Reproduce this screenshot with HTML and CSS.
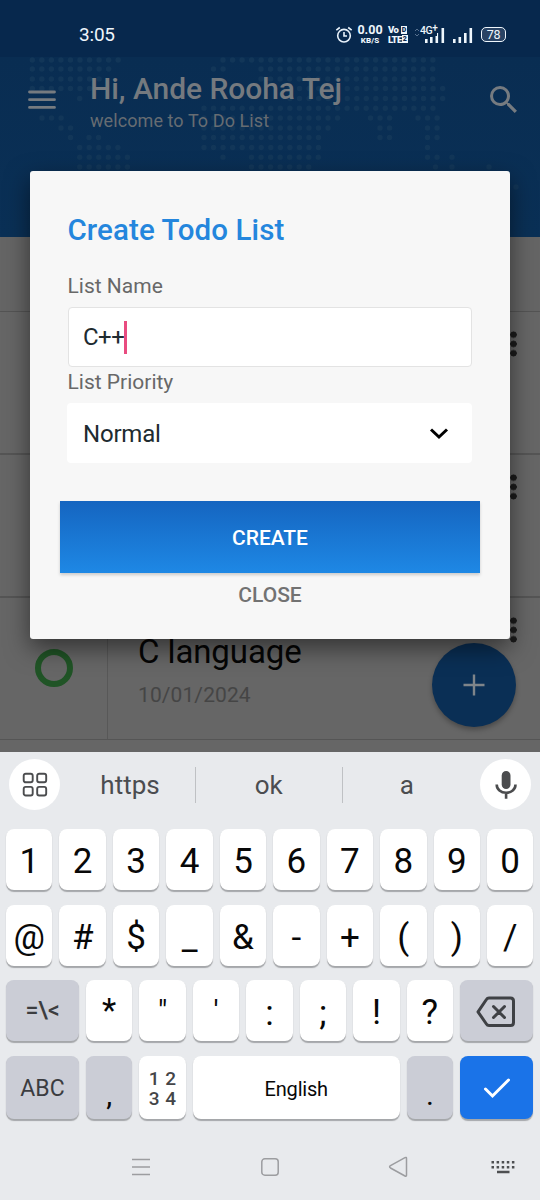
FILE: index.html
```
<!DOCTYPE html>
<html lang="en">
<head>
<meta charset="utf-8">
<title>To Do List</title>
<link rel="stylesheet" href="styles.css">
</head>
<body>
<div class="phone">
  <main class="app">
    <div class="status">
      <span class="clock">3:05</span>
      <svg class="alarm" width="18" height="18" viewBox="0 0 18 18" fill="none" stroke="#e8f2fb" stroke-width="1.6"><circle cx="9" cy="9.7" r="6.3"/><path d="M9 6v4h3M1.3 4.2 4.8 1.5M16.7 4.2 13.2 1.5"/></svg>
      <div class="speed"><b>0.00</b><span>KB/S</span></div>
      <div class="volte"><span>Vo<i>D</i></span><span>LTE<i>2</i></span></div>
      <div class="net"><span>4G<sup>+</sup></span>
        <svg width="31" height="18" viewBox="0 0 31 18" fill="#eef6fc"><path d="M11 13h2.6v4H11zM16 11h2.6v6H16zM21.500 7h2.600v10h-2.600zM27.500 2h2.600v15h-2.600z"/><path d="m1 5 2-2 2 2M1 8l2 2 2-2" fill="none" stroke="#56708e"/></svg>
      </div>
      <svg class="bars" width="21" height="18" viewBox="0 0 21 18" fill="#eef6fc"><path d="M1 13h2.600v4H1zM6.500 11h2.600v6H6.500zM12 7h2.600v10H12zM17.500 2h2.600v15h-2.600z"/></svg>
      <div class="battery">78</div>
    </div>

    <header class="head">
      <svg class="map" width="540" height="180" viewBox="0 55 540 180"><path d="M32.300 60H119M223 60H438M32.300 69H109M213.500 69H228M261 69H438M32.300 79H100M261 79H438M32.300 88.500H90M290 88.500H446M79.700 98.500h1M290 98.500H446M204 108.300H438M42 118H62M204 118H346M370.500 118H392M418 118H438M61 128H71M204 128H337M380 128H392M427.500 128H438M70.500 137.600h1M89 137.600H100M204 137.600H327M380 137.600H392M427.500 137.600H438M79.700 147.400H119M204 147.400H327M427.500 147.400h1M79.700 157.200H128M223 157.200h1M251.500 157.200H327M427.500 157.200H438M452 157.200h1M79.700 167H128M251.500 167H318M435.500 167h1M452 167h1M489 167h1M516 187h1"/></svg>
      <svg class="menu" width="28" height="22" viewBox="0 0 28 22"><path d="M1.500 3h25M1.500 10.700h25M1.500 18.400h25"/></svg>
      <div class="hello">
        <h1>Hi, Ande Rooha Tej</h1>
        <p>welcome to To Do List</p>
      </div>
      <svg class="search" width="27" height="27" viewBox="3 3 17.500 17.500" fill="#767b80"><path d="M15.500 14h-.79l-.28-.27A6.471 6.471 0 0 0 16 9.500 6.500 6.500 0 1 0 9.500 16c1.610 0 3.090-.59 4.230-1.570l.27.28v.79l5 4.990L20.490 19l-4.990-5zm-6 0C7.010 14 5 11.990 5 9.500S7.010 5 9.500 5 14 7.010 14 9.500 11.990 14 9.500 14z"/></svg>
    </header>

    <section class="filter"></section>
    <section class="row"><i class="dots"></i></section>
    <section class="row"><i class="dots"></i></section>
    <section class="row">
      <div class="state"><span class="ring"></span></div>
      <div class="info"><h2>C language</h2><time>10/01/2024</time></div>
      <i class="dots"></i>
    </section>

    <div class="fab"><svg width="24" height="24" viewBox="0 0 24 24"><path d="M12 1.500v21M1.500 12h21"/></svg></div>

    <form class="dialog">
      <h3>Create Todo List</h3>
      <label>List Name</label>
      <div class="input"><span>C++</span><i class="caret"></i></div>
      <label class="second">List Priority</label>
      <div class="select"><span>Normal</span><svg width="20" height="14" viewBox="0 0 20 14"><path d="m2 2.500 8 7.500 8-7.500"/></svg></div>
      <div class="create">CREATE</div>
      <div class="close">CLOSE</div>
    </form>
  </main>

  <section class="keyboard">
    <div class="suggest">
      <div class="round"><svg width="26" height="26" viewBox="0 0 26 26" fill="none" stroke="#4b4c4e" stroke-width="1.900"><rect x="1.700" y="1.700" width="9" height="8.600" rx="2"/><rect x="15.200" y="1.700" width="9" height="8.600" rx="2"/><rect x="1.700" y="14.900" width="9" height="8.600" rx="2"/><rect x="15.200" y="14.900" width="9" height="8.600" rx="2"/></svg></div>
      <span class="word first">https</span><i class="sep"></i><span class="word">ok</span><i class="sep"></i><span class="word last">a</span>
      <div class="round"><svg width="22" height="30" viewBox="0 0 22 30"><rect x="6.700" y="1" width="8.800" height="18" rx="4.400" fill="#4b4c4e"/><path d="M1.700 14.500c0 5 4.200 8.300 9.400 8.300s9.400-3.300 9.400-8.300M11.100 22.500v6.300" fill="none" stroke="#4b4c4e" stroke-width="2.600"/></svg></div>
    </div>
    <div class="keys">
      <b>1</b><b>2</b><b>3</b><b>4</b><b>5</b><b>6</b><b>7</b><b>8</b><b>9</b><b>0</b>
    </div>
    <div class="keys">
      <b>@</b><b>#</b><b>$</b><b>_</b><b>&amp;</b><b>-</b><b>+</b><b>(</b><b>)</b><b>/</b>
    </div>
    <div class="keys">
      <b class="gray wide sym">=\&lt;</b><b class="star">*</b><b class="quote">"</b><b class="quote">'</b><b class="low">:</b><b class="low">;</b><b class="mark">!</b><b class="mark">?</b>
      <b class="gray wide"><svg class="erase" width="40" height="32" viewBox="0 0 40 32"><path d="M13 2h21.500q3 0 3 3v21.500q0 3-3 3H13q-1.700 0-2.600-1.500L2 15.800 10.400 3.500Q11.300 2 13 2zM17.500 10.500l11 11M28.500 10.500l-11 11"/></svg></b>
    </div>
    <div class="keys bottom">
      <b class="gray wide abc">ABC</b><b class="gray punct">,</b><b class="numpad"><span>1 2</span><span>3 4</span></b><b class="space">English</b><b class="gray punct">.</b>
      <b class="wide enter"><svg width="28" height="22" viewBox="0 0 28 22"><path d="m2.500 12 7 7L25.500 3"/></svg></b>
    </div>
    <nav class="nav">
      <svg width="20" height="20" viewBox="0 0 20 20"><path d="M1 2.500h18M1 10h18M1 17.500h18"/></svg>
      <svg width="20" height="20" viewBox="0 0 20 20"><rect x="1.800" y="1.800" width="16.400" height="16.400" rx="3"/></svg>
      <svg width="20" height="22" viewBox="0 0 20 22"><path d="M17 1.700 2.500 9.600q-1.800 1.200 0 2.400L17 20q1.500.8 1.500-.8V2.500q0-1.600-1.500-.8z"/></svg>
      <svg class="kb" width="24" height="14" viewBox="0 0 24 14"><path d="M.5 2.200h24M.5 7.200h24" stroke-dasharray="2.500 2.600"/><path d="M6 12h12.500"/></svg>
    </nav>
  </section>
</div>
</body>
</html>
```
FILE: styles.css
```
* { box-sizing: border-box; }
body { margin: 0; font-family: Roboto, sans-serif; }
h1, h2, h3, p { margin: 0; }
i { font-style: normal; }
svg { display: block; flex: none; }

.phone { width: 540px; height: 1200px; overflow: hidden; display: flex; flex-direction: column; }
.app { position: relative; height: 751.500px; flex: none; overflow: hidden; background: #666; display: flex; flex-direction: column; }

/* status bar */
.status { height: 57px; flex: none; background: #07284d; color: #eef6fc; display: flex; align-items: center; padding: 12px 34px 0 79px; }
.clock { font-size: 19px; letter-spacing: -.2px; margin-right: auto; }
.alarm { margin-right: 4px; }
.speed { width: 26px; display: flex; flex-direction: column; align-items: center; margin-right: 5px; }
.speed b { font-size: 12.500px; font-weight: 700; line-height: 12px; }
.speed span { font-size: 8px; font-weight: 800; line-height: 9px; letter-spacing: .1px; }
.volte { width: 19px; display: flex; flex-direction: column; font-size: 9.500px; font-weight: 900; line-height: 9.500px; margin-right: 7px; letter-spacing: -.6px; }
.volte span { display: flex; justify-content: space-between; align-items: center; }
.volte i { background: #eef6fc; color: #07284d; flex: none; width: 6px; line-height: 8px; height: 8px; font-size: 7px; text-align: center; letter-spacing: 0; }
.net { position: relative; margin-right: 7px; }
.net span { position: absolute; left: 6px; top: 0; font-size: 10.500px; line-height: 10px; font-weight: 500; letter-spacing: -.5px; background: #07284d; height: 10px; }
.net sup { font-size: 10px; line-height: 0; vertical-align: 3px; }
.bars { margin-right: 8px; }
.battery { width: 25px; height: 15px; border: 1.500px solid #eef6fc; border-radius: 5px; font-size: 12.500px; line-height: 13px; text-align: center; background: #294364; letter-spacing: -.3px; }

/* header */
.head { position: relative; height: 180px; flex: none; background: linear-gradient(#092d52, #0a3056); color: #757a7f; display: flex; align-items: flex-start; padding: 0 23px 0 28px; }
.map { position: absolute; left: 0; top: -2px; z-index: 0; }
.map path { fill: none; stroke: #123658; stroke-width: 5.500; stroke-linecap: round; stroke-dasharray: 0 9.540; }
.menu { margin-top: 32px; z-index: 1; }
.menu path { stroke: #767b80; stroke-width: 2.800; stroke-linecap: round; }
.hello { margin: 14px auto 0 34px; z-index: 1; }
.hello h1 { font-size: 30px; font-weight: 500; line-height: 36px; letter-spacing: -.05px; }
.hello p { font-size: 18px; line-height: 22px; margin-top: 3px; color: #666c72; letter-spacing: .08px; }
.search { margin-top: 29px; z-index: 1; }

/* list behind the dialog */
.filter { height: 74.500px; flex: none; border-bottom: 1.500px solid #545454; background: #656565; }
.row { height: 143px; flex: none; border-bottom: 2px solid #555; display: flex; align-items: stretch; }
.row:last-of-type { height: 142px; border-bottom-width: 1px; }
.state { width: 108px; border-right: 1.500px solid #585858; display: flex; align-items: center; padding: 0 0 0 35px; }
.ring { width: 38px; height: 38px; border: 6px solid #205426; border-radius: 50%; }
.info { padding: 34px 0 0 30px; display: flex; flex-direction: column; }
.info h2 { font-size: 33px; line-height: 40px; font-weight: 400; letter-spacing: -.1px; color: #050505; }
.info time { font-size: 21px; line-height: 26px; letter-spacing: .1px; color: #454545; margin-top: 10px; }
.dots { margin: 18px 23px 0 auto; width: 7px; height: 28px; background: radial-gradient(circle, #1b1b1b 3px, transparent 3.500px) 0 0 / 7px 9.300px; }
.fab { position: absolute; left: 432px; top: 643px; width: 84px; height: 84px; border-radius: 50%; background: #0a2f55; display: flex; align-items: center; justify-content: center; box-shadow: 0 3px 5px rgba(0,0,0,.28); }
.fab path { stroke: #7f858a; stroke-width: 2.400; }

/* dialog */
.dialog { position: absolute; left: 30px; top: 170.500px; width: 480px; height: 468px; background: #f7f7f7; border-radius: 3px; box-shadow: 0 9px 24px rgba(0,0,0,.5); padding: 41px 30px 0; display: flex; flex-direction: column; }
.dialog h3 { margin-left: 7.500px; color: #2486dd; font-size: 29.500px; line-height: 36px; font-weight: 500; letter-spacing: .1px; }
.dialog label { margin: 24.500px 7.500px 0; color: #686868; font-size: 21px; line-height: 28px; }
.dialog .second { margin-top: 1px; }
.input, .select { margin: 7px 8px 0; height: 60px; padding: 0 15px; display: flex; align-items: center; background: #fff; border-radius: 4px; color: #202b30; font-size: 24px; }
.input { border: 1.500px solid #e3e3e3; padding-left: 14px; letter-spacing: -.5px; }
.caret { width: 3px; height: 33px; background: #e94c80; }
.select { margin-left: 7px; padding: 1px 23px 0 16px; justify-content: space-between; letter-spacing: -.2px; }
.select path { fill: none; stroke: #000; stroke-width: 3; }
.create { margin-top: 37.500px; height: 72px; line-height: 74px; background: linear-gradient(#1565c0, #1e88e5); color: #fff; text-align: center; font-size: 21px; letter-spacing: -.05px; font-weight: 500; box-shadow: 0 2px 3px rgba(0,0,0,.18); }
.close { line-height: 45px; text-align: center; color: #727272; font-size: 21px; font-weight: 500; }

/* keyboard */
.keyboard { flex: 1; background: #e8eaed; display: flex; flex-direction: column; padding: 7px 6px 0; }
.suggest { height: 52px; margin: 0 -3px 18.500px 3px; display: flex; align-items: center; flex: none; }
.suggest .round { width: 51px; height: 51px; border-radius: 50%; background: #fff; display: flex; align-items: center; justify-content: center; }
.word { width: 145.500px; text-align: center; color: #4b4d50; font-size: 26px; }
.word.first { width: 135px; padding-left: 5px; }
.word.last { width: 137.500px; padding-right: 9px; }
.sep { width: 1px; height: 36px; background: #bfc1c4; }
.keys { height: 61px; flex: none; display: flex; gap: 7px; margin-bottom: 14.700px; }
.keys b { width: 46.450px; height: 61px; flex: none; border-radius: 8px; background: #fff; box-shadow: 0 1.500px 1px #a5a7aa; color: #080808; font-size: 35px; line-height: 40px; font-weight: 400; display: flex; align-items: center; justify-content: center; padding-top: 5px; }
.keys .wide { width: 73px; padding-top: 0; }
.keys .gray { background: #cbcdd6; }
.keys .sym { font-size: 23px; font-weight: 500; color: #3c3d40; }
.keys .quote { font-size: 29px; padding-top: 0; }
.keys .star { font-size: 33px; padding-top: 0; }
.keys .mark { padding-top: 4px; }
.keys .low { padding-top: 6px; }
.bottom b { height: 63px; }
.keys .abc { font-size: 23px; color: #3b3c40; padding-top: 3px; }
.keys .punct { font-size: 30px; padding-top: 15px; }
.keys .numpad { flex-direction: column; font-size: 19px; line-height: 20px; font-weight: 500; color: #444548; padding-top: 2px; letter-spacing: .5px; }
.keys .space { width: 206.800px; font-size: 20px; padding-top: 2px; letter-spacing: -.2px; }
.keys .enter { background: #1a73e8; }
.erase { transform: translate(-1px, 1px); }
.erase path { fill: none; stroke: #3f4145; stroke-width: 3; stroke-linejoin: round; stroke-linecap: round; }
.enter path { fill: none; stroke: #fff; stroke-width: 3; stroke-linecap: round; }
.nav { display: flex; align-items: center; height: 22px; margin-top: 24.400px; padding-left: 125px; gap: 109px; }
.nav path, .nav rect { fill: none; stroke: #9c9da0; stroke-width: 1.500; }
.nav svg:nth-child(3) { margin-left: -1px; }
.nav .kb { margin-left: -26px; }
.nav .kb path { stroke: #4d4f51; stroke-width: 2.500; }
```
